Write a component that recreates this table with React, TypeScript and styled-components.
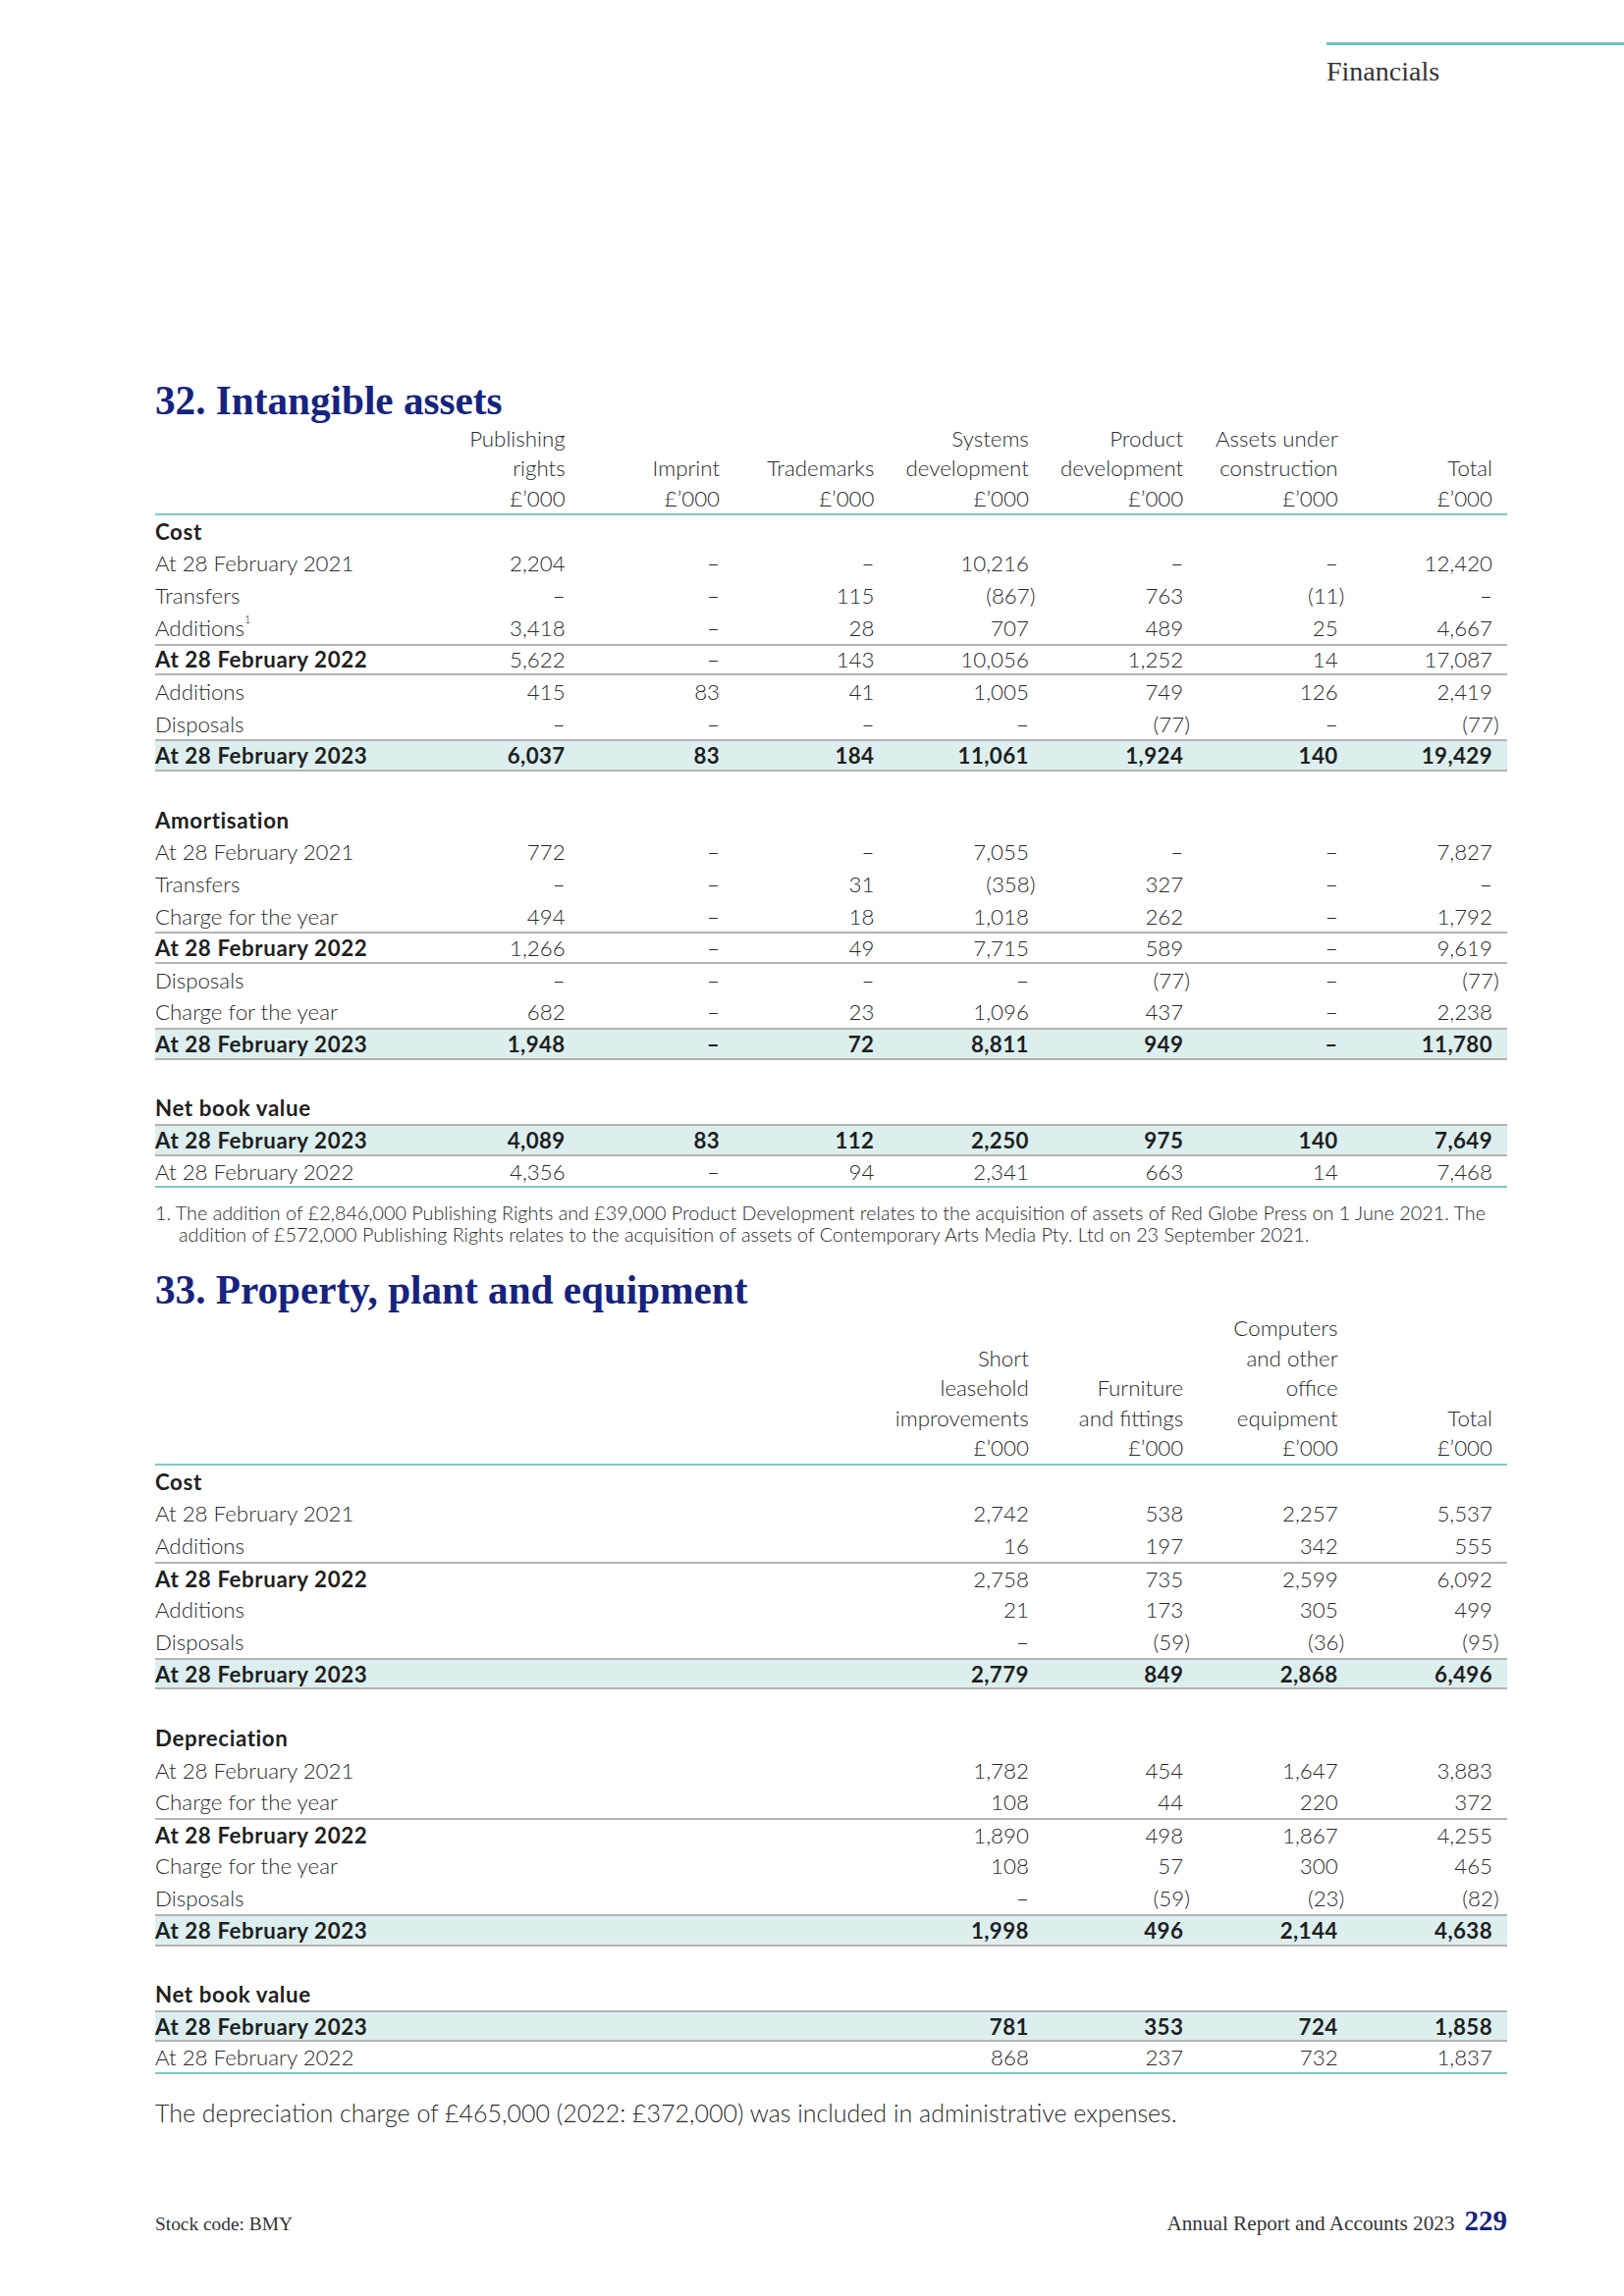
import React from 'react';
import styled, { createGlobalStyle } from 'styled-components';

const NAVY = '#16237f';
const TEAL = '#7ecac6';
const GRAY = '#b3b3b3';
const HIGHLIGHT = '#dcefee';
const TEXT = '#2a2a2a';

const GlobalStyle = createGlobalStyle`
  html, body { margin: 0; padding: 0; background: #ffffff; }
  body { font-family: Lato, "Liberation Sans", sans-serif; color: ${TEXT}; font-weight: 300; }
  * { box-sizing: border-box; }
`;

const Page = styled.div`
  width: 1654px;
  height: 2339px;
  display: flex;
  flex-direction: column;
  background: #fff;
`;

const RunningHead = styled.header`
  margin: 43px 0 0 1351px;
  border-top: 3px solid #6cc4c4;
  padding-top: 10px;
  font-family: "Liberation Serif", serif;
  font-weight: 400;
  font-size: 28px;
  line-height: 34px;
  color: #333;
`;

const Content = styled.main`
  margin-left: 158px;
  width: 1377px;
  display: flex;
  flex-direction: column;
`;

const SectionTitle = styled.h2<{ $top: number }>`
  margin: ${(p) => p.$top}px 0 0;
  font-family: "Liberation Serif", serif;
  font-weight: 700;
  font-size: 41.2px;
  line-height: 48px;
  color: ${NAVY};
`;

const TableGrid = styled.div<{ $cols: number }>`
  display: grid;
  grid-template-columns: 1fr repeat(${(p) => p.$cols}, 157.4px);
`;

const HeadRow = styled(TableGrid)`
  border-bottom: 2px solid ${TEAL};
  font-size: 22.3px;
  line-height: 30.5px;
  color: ${TEXT};
`;

const HeadCell = styled.div`
  display: flex;
  flex-direction: column;
  justify-content: flex-end;
  align-items: flex-end;
  padding-right: 15px;
  white-space: nowrap;
`;

type Rule = 'none' | 'top' | 'both';

const Row = styled(TableGrid)<{ $hl?: boolean; $rule?: Rule; $last?: boolean }>`
  height: 32.65px;
  align-items: center;
  font-size: 22.3px;
  background: ${(p) => (p.$hl ? HIGHLIGHT : 'transparent')};
  border-top: ${(p) => (p.$rule === 'top' || p.$rule === 'both' ? `2px solid ${GRAY}` : 'none')};
  border-bottom: ${(p) =>
    p.$last ? `2px solid ${TEAL}` : p.$rule === 'both' ? `2px solid ${GRAY}` : 'none'};
`;

const Label = styled.div<{ $bold?: boolean }>`
  white-space: nowrap;
  font-weight: ${(p) => (p.$bold ? 700 : 300)};
  letter-spacing: ${(p) => (p.$bold ? '0.6px' : '0')};
  color: ${(p) => (p.$bold ? '#1f1f1f' : TEXT)};
`;

const Num = styled.div<{ $bold?: boolean }>`
  text-align: right;
  padding-right: 15px;
  white-space: nowrap;
  font-weight: ${(p) => (p.$bold ? 700 : 300)};
  letter-spacing: ${(p) => (p.$bold ? '0.4px' : '0')};
  color: ${(p) => (p.$bold ? '#1f1f1f' : TEXT)};
`;

const Paren = styled.span`
  margin-right: -0.3em;
`;

const Sup = styled.sup`
  font-size: 11px;
  vertical-align: top;
  position: relative;
  top: -2px;
`;

const Footnote = styled.p`
  margin: 14.5px 0 0;
  padding-left: 24px;
  text-indent: -24px;
  font-size: 19.75px;
  line-height: 22.4px;
  color: ${TEXT};
  white-space: nowrap;
`;

const Sentence = styled.p`
  margin: 23.5px 0 0;
  font-size: 25px;
  line-height: 30px;
  color: ${TEXT};
`;

const Footer = styled.footer`
  margin: auto 119px 0 158px;
  padding-bottom: 58px;
  display: flex;
  justify-content: space-between;
  align-items: baseline;
  font-family: "Liberation Serif", serif;
  font-weight: 400;
  line-height: 30px;
  color: #333;
`;

const StockCode = styled.span`
  font-size: 19.4px;
`;

const FooterRight = styled.div`
  display: flex;
  align-items: baseline;
  gap: 10px;
  font-size: 21.2px;
`;

const PageNo = styled.span`
  font-size: 29px;
  font-weight: 700;
  color: ${NAVY};
`;

type Kind = 'head' | 'item' | 'sub' | 'subBoth' | 'total' | 'blank' | 'last';

interface RowData {
  kind: Kind;
  label?: React.ReactNode;
  values?: string[];
}

const fmt = (v: string) =>
  v.startsWith('(') ? (
    <>
      {v.slice(0, -1)}
      <Paren>)</Paren>
    </>
  ) : (
    v
  );

function DataTable({ cols, headers, rows }: { cols: number; headers: string[][]; rows: RowData[] }) {
  return (
    <div>
      <HeadRow $cols={cols}>
        <HeadCell />
        {headers.map((lines, i) => (
          <HeadCell key={i}>
            {lines.map((l, j) => (
              <span key={j}>{l}</span>
            ))}
          </HeadCell>
        ))}
      </HeadRow>
      {rows.map((r, i) => {
        const hl = r.kind === 'total';
        const rule: Rule =
          r.kind === 'total' || r.kind === 'subBoth' ? 'both' : r.kind === 'sub' ? 'top' : 'none';
        const boldLabel = r.kind === 'head' || r.kind === 'sub' || r.kind === 'subBoth' || r.kind === 'total';
        const boldVals = r.kind === 'total';
        return (
          <Row key={i} $cols={cols} $hl={hl} $rule={rule} $last={r.kind === 'last'}>
            <Label $bold={boldLabel}>{r.label}</Label>
            {(r.values || Array(cols).fill('')).map((v, j) => (
              <Num key={j} $bold={boldVals}>
                {fmt(v)}
              </Num>
            ))}
          </Row>
        );
      })}
    </div>
  );
}

const D = '–';
const A21 = 'At 28 February 2021';
const A22 = 'At 28 February 2022';
const A23 = 'At 28 February 2023';

const intangibleHeaders = [
  ['Publishing', 'rights', '£’000'],
  ['Imprint', '£’000'],
  ['Trademarks', '£’000'],
  ['Systems', 'development', '£’000'],
  ['Product', 'development', '£’000'],
  ['Assets under', 'construction', '£’000'],
  ['Total', '£’000'],
];

const intangibleRows: RowData[] = [
  { kind: 'head', label: 'Cost' },
  { kind: 'item', label: A21, values: ['2,204', D, D, '10,216', D, D, '12,420'] },
  { kind: 'item', label: 'Transfers', values: [D, D, '115', '(867)', '763', '(11)', D] },
  {
    kind: 'item',
    label: (
      <>
        Additions<Sup>1</Sup>
      </>
    ),
    values: ['3,418', D, '28', '707', '489', '25', '4,667'],
  },
  { kind: 'subBoth', label: A22, values: ['5,622', D, '143', '10,056', '1,252', '14', '17,087'] },
  { kind: 'item', label: 'Additions', values: ['415', '83', '41', '1,005', '749', '126', '2,419'] },
  { kind: 'item', label: 'Disposals', values: [D, D, D, D, '(77)', D, '(77)'] },
  { kind: 'total', label: A23, values: ['6,037', '83', '184', '11,061', '1,924', '140', '19,429'] },
  { kind: 'blank' },
  { kind: 'head', label: 'Amortisation' },
  { kind: 'item', label: A21, values: ['772', D, D, '7,055', D, D, '7,827'] },
  { kind: 'item', label: 'Transfers', values: [D, D, '31', '(358)', '327', D, D] },
  { kind: 'item', label: 'Charge for the year', values: ['494', D, '18', '1,018', '262', D, '1,792'] },
  { kind: 'subBoth', label: A22, values: ['1,266', D, '49', '7,715', '589', D, '9,619'] },
  { kind: 'item', label: 'Disposals', values: [D, D, D, D, '(77)', D, '(77)'] },
  { kind: 'item', label: 'Charge for the year', values: ['682', D, '23', '1,096', '437', D, '2,238'] },
  { kind: 'total', label: A23, values: ['1,948', D, '72', '8,811', '949', D, '11,780'] },
  { kind: 'blank' },
  { kind: 'head', label: 'Net book value' },
  { kind: 'total', label: A23, values: ['4,089', '83', '112', '2,250', '975', '140', '7,649'] },
  { kind: 'last', label: A22, values: ['4,356', D, '94', '2,341', '663', '14', '7,468'] },
];

const ppeHeaders = [
  ['Short', 'leasehold', 'improvements', '£’000'],
  ['Furniture', 'and fittings', '£’000'],
  ['Computers', 'and other', 'office', 'equipment', '£’000'],
  ['Total', '£’000'],
];

const ppeRows: RowData[] = [
  { kind: 'head', label: 'Cost' },
  { kind: 'item', label: A21, values: ['2,742', '538', '2,257', '5,537'] },
  { kind: 'item', label: 'Additions', values: ['16', '197', '342', '555'] },
  { kind: 'sub', label: A22, values: ['2,758', '735', '2,599', '6,092'] },
  { kind: 'item', label: 'Additions', values: ['21', '173', '305', '499'] },
  { kind: 'item', label: 'Disposals', values: [D, '(59)', '(36)', '(95)'] },
  { kind: 'total', label: A23, values: ['2,779', '849', '2,868', '6,496'] },
  { kind: 'blank' },
  { kind: 'head', label: 'Depreciation' },
  { kind: 'item', label: A21, values: ['1,782', '454', '1,647', '3,883'] },
  { kind: 'item', label: 'Charge for the year', values: ['108', '44', '220', '372'] },
  { kind: 'sub', label: A22, values: ['1,890', '498', '1,867', '4,255'] },
  { kind: 'item', label: 'Charge for the year', values: ['108', '57', '300', '465'] },
  { kind: 'item', label: 'Disposals', values: [D, '(59)', '(23)', '(82)'] },
  { kind: 'total', label: A23, values: ['1,998', '496', '2,144', '4,638'] },
  { kind: 'blank' },
  { kind: 'head', label: 'Net book value' },
  { kind: 'total', label: A23, values: ['781', '353', '724', '1,858'] },
  { kind: 'last', label: A22, values: ['868', '237', '732', '1,837'] },
];

export default function App() {
  return (
    <Page>
      <GlobalStyle />
      <RunningHead>Financials</RunningHead>
      <Content>
        <SectionTitle $top={293.5}>32. Intangible assets</SectionTitle>
        <DataTable cols={7} headers={intangibleHeaders} rows={intangibleRows} />
        <Footnote>
          1. The addition of £2,846,000 Publishing Rights and £39,000 Product Development relates to the
          acquisition of assets of Red Globe Press on 1 June 2021. The
          <br />
          addition of £572,000 Publishing Rights relates to the acquisition of assets of Contemporary Arts
          Media Pty. Ltd on 23 September 2021.
        </Footnote>
        <SectionTitle $top={20.7}>33. Property, plant and equipment</SectionTitle>
        <DataTable cols={4} headers={ppeHeaders} rows={ppeRows} />
        <Sentence>
          The depreciation charge of £465,000 (2022: £372,000) was included in administrative expenses.
        </Sentence>
      </Content>
      <Footer>
        <StockCode>Stock code: BMY</StockCode>
        <FooterRight>
          <span>Annual Report and Accounts 2023</span>
          <PageNo>229</PageNo>
        </FooterRight>
      </Footer>
    </Page>
  );
}
